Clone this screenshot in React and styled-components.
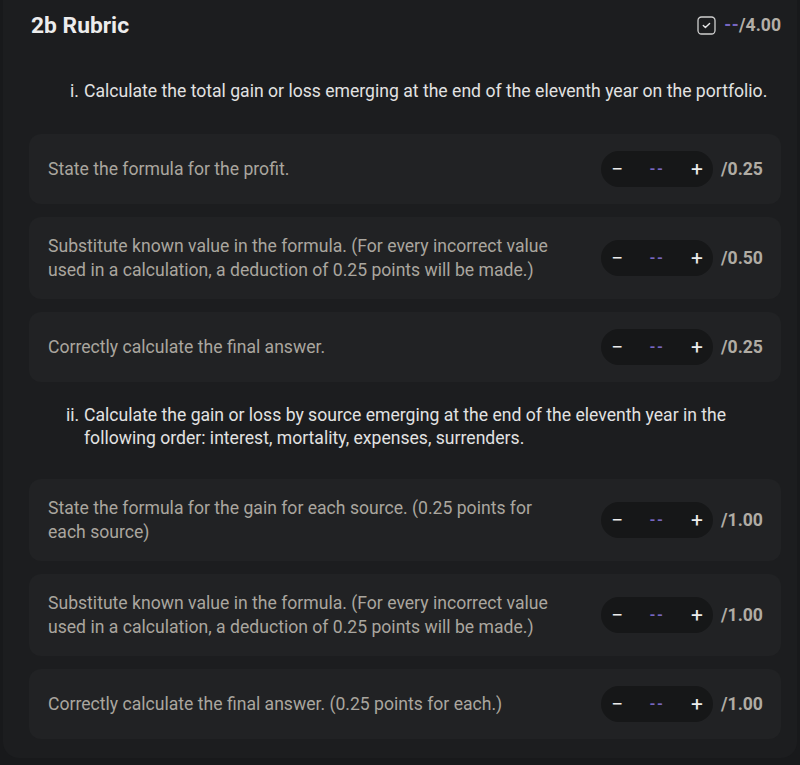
import React from "react";
import styled, { createGlobalStyle } from "styled-components";

const Global = createGlobalStyle`
  html, body { margin: 0; padding: 0; background: #18191b; }
  body { font-family: Roboto, "Noto Sans", "Liberation Sans", sans-serif; }
  #root { padding: 0 3px; }
`;

const Panel = styled.div`
  background: #1c1d1f;
  border-radius: 0 0 16px 16px;
  padding: 13px 16px 20px 26px;
  height: 758px;
  box-sizing: border-box;
`;

const Header = styled.div`
  display: flex;
  align-items: center;
  justify-content: space-between;
  height: 24px;
  padding-left: 2px;
  margin-bottom: 21px;
`;

const Title = styled.h2`
  margin: 0;
  font-size: 22.8px;
  font-weight: 700;
  color: #ececec;
`;

const Total = styled.div`
  display: flex;
  align-items: center;
  gap: 8px;
  font-size: 17.6px;
  font-weight: 700;
  color: #b4afa7;
`;

const Dash = styled.span`
  color: #7766c0;
  letter-spacing: 0.5px;
`;

const Section = styled.div`
  display: flex;
  padding: 22px 0 ${(p) => p.$after}px ${(p) => p.$indent}px;
  font-size: 17.6px;
  line-height: 23px;
  color: #e2e2e2;
`;

const Marker = styled.span`
  flex: 0 0 auto;
  width: ${(p) => p.$width}px;
`;

const SectionText = styled.span`
  flex: 1;
`;

const Cards = styled.div`
  display: flex;
  flex-direction: column;
  gap: 13px;
`;

const Card = styled.div`
  display: flex;
  align-items: center;
  gap: 36px;
  background: #212224;
  border-radius: 12px;
  padding: 17px 18px 17px 19px;
  min-height: 36px;
`;

const CardText = styled.div`
  flex: 1;
  font-size: 17.6px;
  line-height: 24px;
  color: #aaa69f;
`;

const Controls = styled.div`
  display: flex;
  align-items: center;
  gap: 8px;
`;

const Stepper = styled.div`
  display: grid;
  grid-template-columns: 32px 1fr 32px;
  align-items: center;
  width: 112px;
  height: 36px;
  border-radius: 18px;
  background: #161718;
`;

const StepButton = styled.span`
  display: flex;
  align-items: center;
  justify-content: center;
  color: #ececec;
  font-size: 21px;
  font-weight: 400;
  line-height: 1;
`;

const StepValue = styled.span`
  text-align: center;
  font-size: 15px;
  font-weight: 700;
  color: #7766c0;
  letter-spacing: 1.5px;
`;

const Max = styled.span`
  width: 42px;
  font-size: 17.6px;
  font-weight: 700;
  color: #b0aca4;
`;

const CheckIcon = () => (
  <svg width="19" height="19" viewBox="0 0 19 19" fill="none">
    <rect x="1" y="1" width="17" height="17" rx="3.5" stroke="#cfcfcf" strokeWidth="1.3" />
    <path d="M6.3 9.6 L8.4 11.6 L12.6 7.4" stroke="#e6e6e6" strokeWidth="1.4" strokeLinecap="round" strokeLinejoin="round" />
  </svg>
);

const Item = ({ text, max }) => (
  <Card>
    <CardText>{text}</CardText>
    <Controls>
      <Stepper>
        <StepButton>−</StepButton>
        <StepValue>--</StepValue>
        <StepButton>+</StepButton>
      </Stepper>
      <Max>/{max}</Max>
    </Controls>
  </Card>
);

const partOne = [
  { text: "State the formula for the profit.", max: "0.25" },
  {
    text: "Substitute known value in the formula. (For every incorrect value used in a calculation, a deduction of 0.25 points will be made.)",
    max: "0.50",
  },
  { text: "Correctly calculate the final answer.", max: "0.25" },
];

const partTwo = [
  { text: "State the formula for the gain for each source. (0.25 points for each source)", max: "1.00" },
  {
    text: "Substitute known value in the formula. (For every incorrect value used in a calculation, a deduction of 0.25 points will be made.)",
    max: "1.00",
  },
  { text: "Correctly calculate the final answer. (0.25 points for each.)", max: "1.00" },
];

export default function App() {
  return (
    <>
      <Global />
      <Panel>
        <Header>
          <Title>2b Rubric</Title>
          <Total>
            <CheckIcon />
            <span>
              <Dash>--</Dash>/4.00
            </span>
          </Total>
        </Header>
        <Section $after={31} $indent={41}>
          <Marker $width={14}>i.</Marker>
          <SectionText>Calculate the total gain or loss emerging at the end of the eleventh year on the portfolio.</SectionText>
        </Section>
        <Cards>
          {partOne.map((it, i) => (
            <Item key={i} {...it} />
          ))}
        </Cards>
        <Section $after={29} $indent={37}>
          <Marker $width={18}>ii.</Marker>
          <SectionText>
            Calculate the gain or loss by source emerging at the end of the eleventh year in the following order: interest, mortality, expenses, surrenders.
          </SectionText>
        </Section>
        <Cards>
          {partTwo.map((it, i) => (
            <Item key={i} {...it} />
          ))}
        </Cards>
      </Panel>
    </>
  );
}
